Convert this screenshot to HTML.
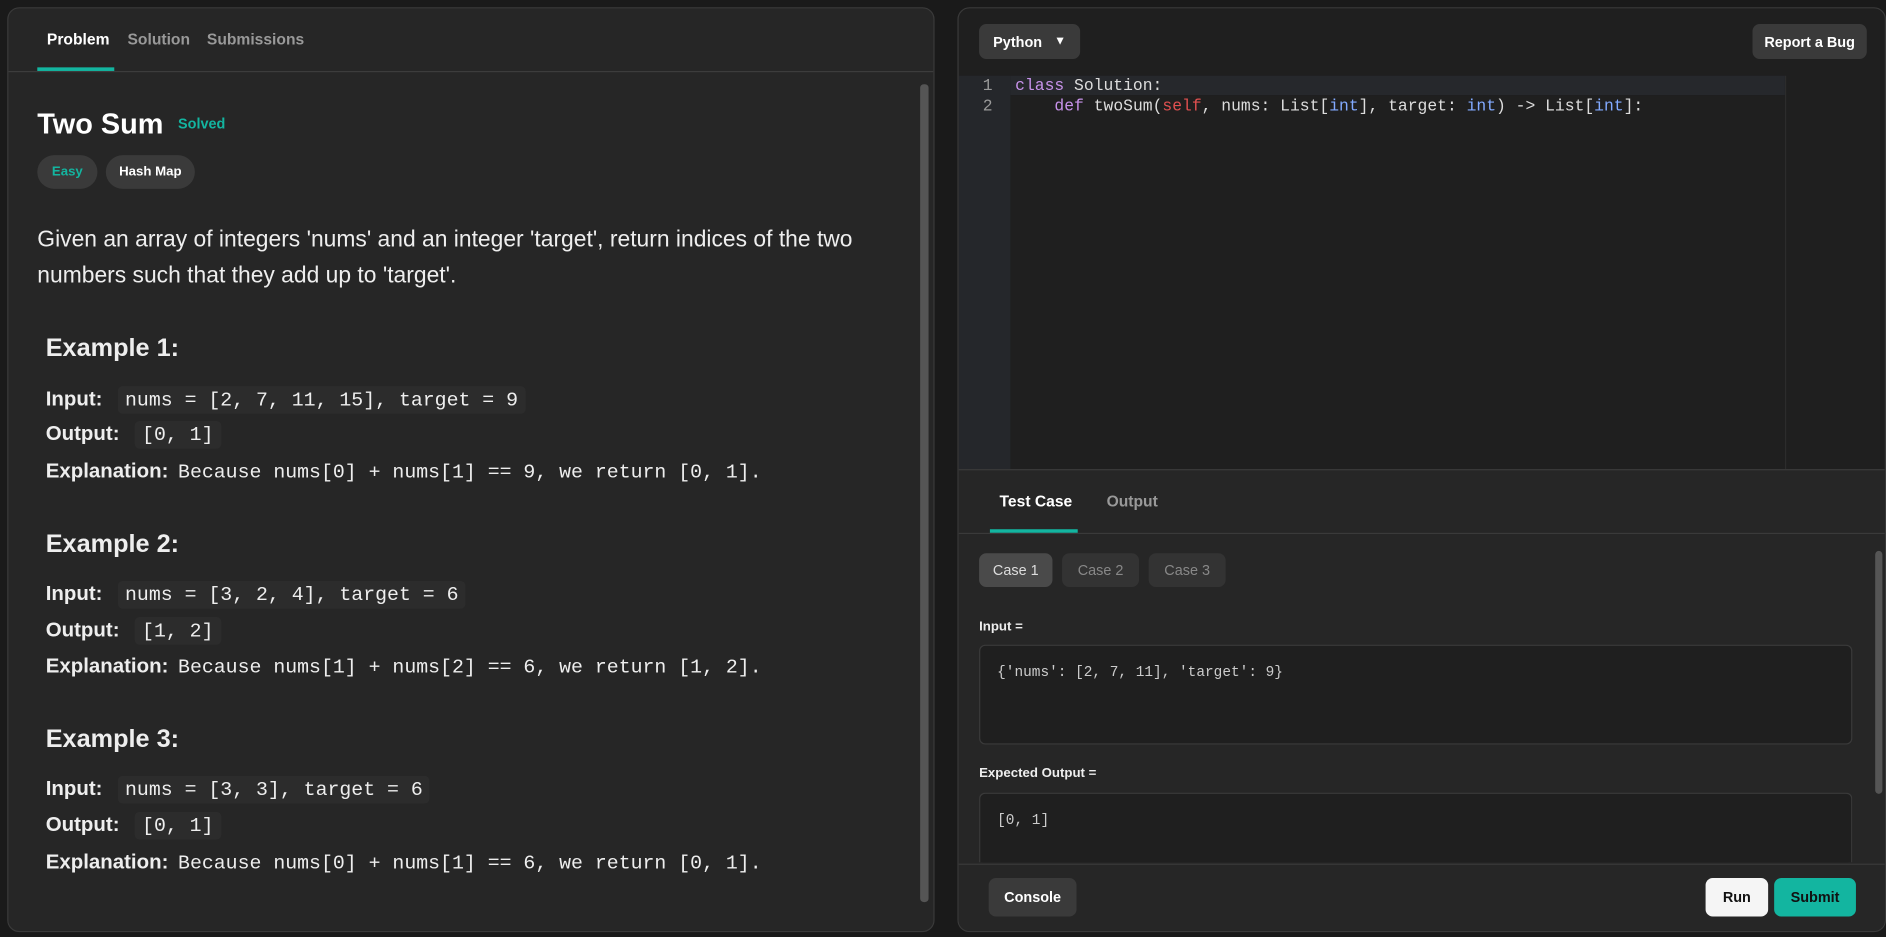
<!DOCTYPE html>
<html><head><style>
*{box-sizing:border-box;margin:0;padding:0}
html,body{width:1886px;height:937px;background:#1a1a1a;overflow:hidden}
#w{position:absolute;left:0;top:0;width:1568px;height:779px;transform:scale(1.20281);transform-origin:0 0;font-family:"Liberation Sans",sans-serif;color:#eee}
.p{position:absolute;background:#262626;border:1px solid #3a3a3a;border-radius:10px;overflow:hidden}
.tab{position:absolute;font-size:13px;font-weight:bold}
.mono{font-family:"Liberation Mono",monospace;font-size:16.5px}
.code{background:#2c2c2c;border-radius:4px;padding:2px 6px}
.row{position:absolute;left:38px;font-size:17px}
.row b{margin-right:8px}
.ex{position:absolute;left:38px;font-size:21px;font-weight:bold}
.btn{position:absolute;border-radius:6px;font-size:12px;font-weight:bold;display:flex;align-items:center;justify-content:center}
.box{position:absolute;left:814px;width:726px;background:#1f1f1f;border:1px solid #3a3a3a;border-radius:5px;font-family:"Liberation Mono",monospace;font-size:12px;color:#ccc;padding:15px 14px}
</style></head><body><div id="w">
<div class="p" style="left:6px;top:6px;width:771px;height:769px">
 <div style="position:absolute;left:0;right:0;top:52px;border-top:1px solid #3c3c3c"></div>
 <div class="tab" style="left:32px;top:18px;color:#fff">Problem</div>
 <div style="position:absolute;left:24px;top:49px;width:64px;height:3px;background:#13b5a0"></div>
 <div class="tab" style="left:99px;top:18px;color:#999">Solution</div>
 <div class="tab" style="left:165px;top:18px;color:#999">Submissions</div>
 <div style="position:absolute;left:24px;top:83px;font-size:24px;font-weight:bold;color:#fff">Two Sum</div>
 <div style="position:absolute;left:141px;top:89px;font-size:12px;font-weight:bold;color:#13b5a0">Solved</div>
 <div class="btn" style="left:24px;top:122px;width:50px;height:28px;background:#3a3a3a;border-radius:14px;color:#13b5a0;font-size:11px">Easy</div>
 <div class="btn" style="left:81px;top:122px;width:74px;height:28px;background:#3a3a3a;border-radius:14px;color:#fff;font-size:11px">Hash Map</div>
 <div style="position:absolute;left:24px;top:178px;width:700px;font-size:19px;line-height:30px;color:#eee">Given an array of integers 'nums' and an integer 'target', return indices of the two numbers such that they add up to 'target'.</div>
</div>
<div class="ex" style="top:278px">Example 1:</div>
<div class="row" style="top:322px"><b>Input:</b> <span class="mono code">nums = [2, 7, 11, 15], target = 9</span></div>
<div class="row" style="top:351px"><b>Output:</b> <span class="mono code">[0, 1]</span></div>
<div class="row" style="top:382px"><b>Explanation:</b><span class="mono">Because nums[0] + nums[1] == 9, we return [0, 1].</span></div>
<div class="ex" style="top:441px">Example 2:</div>
<div class="row" style="top:484px"><b>Input:</b> <span class="mono code">nums = [3, 2, 4], target = 6</span></div>
<div class="row" style="top:514px"><b>Output:</b> <span class="mono code">[1, 2]</span></div>
<div class="row" style="top:544px"><b>Explanation:</b><span class="mono">Because nums[1] + nums[2] == 6, we return [1, 2].</span></div>
<div class="ex" style="top:603px">Example 3:</div>
<div class="row" style="top:646px"><b>Input:</b> <span class="mono code">nums = [3, 3], target = 6</span></div>
<div class="row" style="top:676px"><b>Output:</b> <span class="mono code">[0, 1]</span></div>
<div class="row" style="top:707px"><b>Explanation:</b><span class="mono">Because nums[0] + nums[1] == 6, we return [0, 1].</span></div>
<div style="position:absolute;left:765px;top:70px;width:7px;height:680px;background:#555;border-radius:3px"></div>

<div class="p" style="left:796px;top:6px;width:772px;height:769px;background:#1f1f1f">
 <div class="btn" style="left:17px;top:13px;width:84px;height:29px;background:#3a3a3a;color:#fff">Python&nbsp;&nbsp;&nbsp;<span style="font-size:10px">▼</span></div>
 <div class="btn" style="left:660px;top:13px;width:95px;height:29px;background:#3a3a3a;color:#fff">Report a Bug</div>
 <div style="position:absolute;left:0;top:56px;width:43px;height:327px;background:#25272b"></div>
 <div style="position:absolute;left:43px;top:56px;width:644px;height:16px;background:#26282c"></div>
 <div style="position:absolute;left:687px;top:56px;width:1px;height:327px;background:#2c2c2c"></div>
 <div class="mono" style="position:absolute;left:20px;top:57px;font-size:13.6px;line-height:17px;color:#999">1<br>2</div>
 <div class="mono" style="position:absolute;left:47px;top:57px;font-size:13.6px;line-height:17px;color:#ddd;white-space:pre"><span style="color:#c792ea">class</span> Solution:
    <span style="color:#c792ea">def</span> twoSum(<span style="color:#e05050">self</span>, nums: List[<span style="color:#82aaff">int</span>], target: <span style="color:#82aaff">int</span>) -> List[<span style="color:#82aaff">int</span>]:</div>
 <div style="position:absolute;left:0;right:0;top:383px;height:328px;background:#262626;border-top:1px solid #3a3a3a"></div>
 <div class="tab" style="left:34px;top:402px;color:#fff">Test Case</div>
 <div style="position:absolute;left:26px;top:433px;width:73px;height:3px;background:#13b5a0"></div>
 <div class="tab" style="left:123px;top:402px;color:#999">Output</div>
 <div style="position:absolute;left:0;right:0;top:436px;border-top:1px solid #3a3a3a"></div>
 <div style="position:absolute;left:0;right:0;top:711px;height:60px;background:#262626;border-top:1px solid #3a3a3a"></div>
</div>
<div class="btn" style="left:814px;top:460px;width:61px;height:28px;background:#4a4a4a;color:#ddd;font-weight:normal">Case 1</div>
<div class="btn" style="left:883px;top:460px;width:64px;height:28px;background:#333;color:#888;font-weight:normal">Case 2</div>
<div class="btn" style="left:955px;top:460px;width:64px;height:28px;background:#333;color:#888;font-weight:normal">Case 3</div>
<div style="position:absolute;left:814px;top:515px;font-size:11px;font-weight:bold">Input =</div>
<div class="box" style="top:536px;height:83px">{'nums': [2, 7, 11], 'target': 9}</div>
<div style="position:absolute;left:814px;top:637px;font-size:11px;font-weight:bold">Expected Output =</div>
<div class="box" style="top:659px;height:58px;border-bottom:none;border-radius:5px 5px 0 0">[0, 1]</div>
<div style="position:absolute;left:1559px;top:458px;width:6px;height:202px;background:#555;border-radius:3px"></div>
<div class="btn" style="left:822px;top:730px;width:73px;height:32px;background:#3a3a3a;color:#fff">Console</div>
<div class="btn" style="left:1418px;top:730px;width:52px;height:32px;background:#f5f5f5;color:#111">Run</div>
<div class="btn" style="left:1475px;top:730px;width:68px;height:32px;background:#13b5a0;color:#111">Submit</div>
</div></body></html>
